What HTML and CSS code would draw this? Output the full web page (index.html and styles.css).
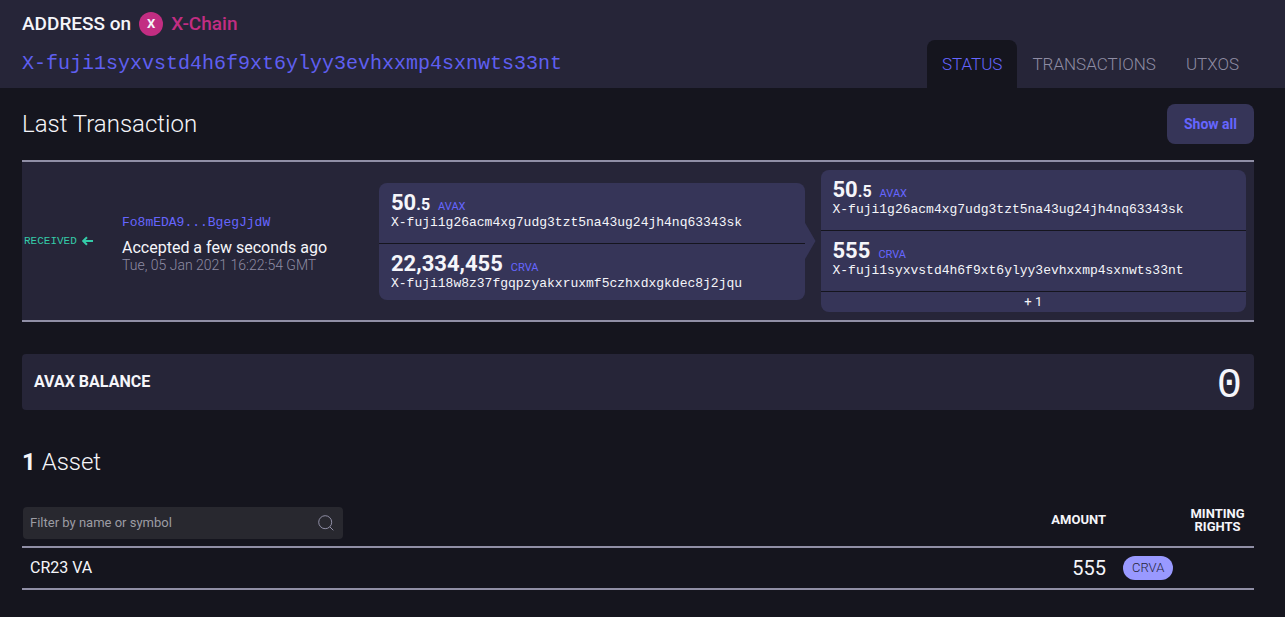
FILE: index.html
```html
<!DOCTYPE html>
<html lang="en">
<head>
<meta charset="utf-8">
<title>Address on X-Chain</title>
<link rel="stylesheet" href="styles.css">
</head>
<body>
<header class="page-header">
  <div class="identity">
    <h1 class="title">ADDRESS on <span class="chain-badge">X</span> <span class="chain-name">X-Chain</span></h1>
    <p class="address">X-fuji1syxvstd4h6f9xt6ylyy3evhxxmp4sxnwts33nt</p>
  </div>
  <nav class="tabs">
    <a class="tab tab-active" href="#status">STATUS</a>
    <a class="tab" href="#transactions">TRANSACTIONS</a>
    <a class="tab" href="#utxos">UTXOS</a>
  </nav>
</header>
<main class="content">
  <section>
    <div class="section-head">
      <h2 class="heading">Last Transaction</h2>
      <button class="show-all" type="button">Show all</button>
    </div>
    <article class="transaction">
      <div class="direction">RECEIVED
        <svg class="arrow" viewBox="0 0 12 10" aria-hidden="true"><path d="M11 5H1.5M5 1.2L1.2 5L5 8.8"/></svg>
      </div>
      <div class="summary">
        <a class="tx-id" href="#tx">Fo8mEDA9...BgegJjdW</a>
        <p class="accepted">Accepted a few seconds ago</p>
        <p class="timestamp">Tue, 05 Jan 2021 16:22:54 GMT</p>
      </div>
      <div class="flow">
        <div class="card card-from">
          <div class="entry">
            <p class="amount">50<span class="decimals">.5</span><span class="unit">AVAX</span></p>
            <p class="account">X-fuji1g26acm4xg7udg3tzt5na43ug24jh4nq63343sk</p>
          </div>
          <div class="entry">
            <p class="amount">22,334,455<span class="unit">CRVA</span></p>
            <p class="account">X-fuji18w8z37fgqpzyakxruxmf5czhxdxgkdec8j2jqu</p>
          </div>
        </div>
        <div class="card">
          <div class="entry">
            <p class="amount">50<span class="decimals">.5</span><span class="unit">AVAX</span></p>
            <p class="account">X-fuji1g26acm4xg7udg3tzt5na43ug24jh4nq63343sk</p>
          </div>
          <div class="entry">
            <p class="amount">555<span class="unit">CRVA</span></p>
            <p class="account">X-fuji1syxvstd4h6f9xt6ylyy3evhxxmp4sxnwts33nt</p>
          </div>
          <p class="more">+ 1</p>
        </div>
      </div>
    </article>
  </section>
  <section class="balance">
    <h2 class="balance-label">AVAX BALANCE</h2>
    <span class="balance-value">0</span>
  </section>
  <section>
    <h2 class="heading"><strong class="count">1</strong> Asset</h2>
    <table class="assets">
      <thead>
        <tr>
          <th class="name-cell">
            <div class="filter">
              <input class="filter-input" type="text" aria-label="Filter by name or symbol" placeholder="Filter by name or symbol">
              <svg class="search-icon" viewBox="0 0 16 16" aria-hidden="true"><circle cx="7.2" cy="7.2" r="6.5"/><path d="M12 12l3.3 3.3"/></svg>
            </div>
          </th>
          <th class="amount-cell">AMOUNT</th>
          <th class="symbol-cell" aria-label="Symbol"></th>
          <th class="rights-cell">MINTING<br>RIGHTS</th>
        </tr>
      </thead>
      <tbody>
        <tr>
          <td class="name-cell">CR23 VA</td>
          <td class="amount-cell">555</td>
          <td class="symbol-cell"><span class="pill">CRVA</span></td>
          <td class="rights-cell"></td>
        </tr>
      </tbody>
    </table>
  </section>
</main>
</body>
</html>
```
FILE: styles.css
```css
* {
  box-sizing: border-box;
}

body {
  margin: 0;
  background: #15151e;
  color: #f5f5fa;
  font: 400 16px/16px Roboto, sans-serif;
}

h1, h2, p {
  margin: 0;
}

a {
  color: inherit;
  text-decoration: none;
}

.page-header {
  display: flex;
  justify-content: space-between;
  align-items: flex-end;
  padding: 12px 31px 0 22px;
  background: #262538;
}

.title {
  display: flex;
  align-items: center;
  gap: 8px;
  font-size: 19px;
  font-weight: 500;
  line-height: 24px;
}

.chain-badge {
  width: 24px;
  border-radius: 50%;
  background: #c22d82;
  font-size: 13px;
  font-weight: 700;
  text-align: center;
}

.chain-name {
  color: #c22d82;
}

.address {
  padding: 16px 0 12px;
  color: #5f5ff0;
  font: 300 20px/24px "Liberation Mono", monospace;
}

.tabs {
  display: flex;
}

.tab {
  padding: 16px 15px;
  border-radius: 8px 8px 0 0;
  color: #8e8ca3;
  font-size: 17px;
  font-weight: 300;
}

.tab-active {
  background: #15151e;
  color: #6666ff;
}

.content {
  padding: 16px 31px 24px 22px;
}

.section-head {
  display: flex;
  justify-content: space-between;
  align-items: center;
  margin-bottom: 16px;
}

.heading {
  font-size: 24px;
  font-weight: 300;
  line-height: 32px;
}

.count {
  font-weight: 700;
}

.show-all {
  height: 40px;
  padding: 0 17px;
  border: 0;
  border-radius: 8px;
  background: #363558;
  color: #6666ff;
  font: 700 14px/16px Roboto, sans-serif;
}

.transaction {
  display: grid;
  grid-template-columns: 98px 257px 1fr;
  align-items: center;
  padding: 8px 8px 8px 2px;
  border-top: 2px solid #908fa6;
  border-bottom: 2px solid #908fa6;
  background: #262538;
}

.direction {
  display: flex;
  align-items: center;
  gap: 5px;
  color: #34cba8;
  font: 11px/16px "Liberation Mono", monospace;
}

.arrow {
  width: 12px;
  height: 10px;
  fill: none;
  stroke: currentColor;
  stroke-width: 2;
}

.summary {
  padding-top: 4px;
}

.tx-id {
  color: #6666ff;
  font: 13px/16px "Liberation Mono", monospace;
}

.accepted {
  padding-top: 8px;
  line-height: 18px;
}

.timestamp {
  color: #8e8ca3;
  font-size: 14px;
  font-weight: 300;
}

.flow {
  display: grid;
  grid-template-columns: 1fr 1fr;
  align-items: center;
  gap: 16px;
}

.card {
  position: relative;
  border-radius: 8px;
  background: #363558;
}

.card-from::after {
  content: "";
  position: absolute;
  top: 50%;
  left: 100%;
  width: 11px;
  height: 38px;
  background: #363558;
  clip-path: polygon(0 0, 100% 50%, 0 100%);
  transform: translateY(-50%);
}

.entry {
  padding: 8px 12px 12px;
  border-bottom: 1px solid #15151e;
}

.card-from .entry:last-child {
  padding-bottom: 8px;
  border-bottom: 0;
}

.amount {
  font-size: 22px;
  font-weight: 700;
  line-height: 24px;
}

.decimals {
  font-size: 16px;
  line-height: 16px;
}

.unit {
  margin-left: 8px;
  color: #6666ff;
  font-size: 11px;
  font-weight: 400;
  line-height: 12px;
}

.account {
  font: 13px/16px "Liberation Mono", monospace;
}

.more {
  font-size: 13px;
  line-height: 20px;
  text-align: center;
}

.balance {
  display: flex;
  justify-content: space-between;
  align-items: center;
  height: 56px;
  margin: 32px 0 36px;
  padding: 0 12px;
  border-radius: 4px;
  background: #262538;
}

.balance-label {
  font-size: 16px;
  font-weight: 700;
}

.balance-value {
  padding-top: 8px;
  font: 42px/48px "Liberation Mono", monospace;
}

.assets {
  width: 100%;
  margin-top: 29px;
  border-collapse: collapse;
}

.assets tr {
  border-bottom: 2px solid #908fa6;
}

.assets th {
  height: 40px;
  padding: 0;
  font-size: 13px;
  font-weight: 700;
  line-height: 13px;
  vertical-align: top;
}

.assets td {
  height: 42px;
  padding: 0;
}

.assets .name-cell {
  text-align: left;
}

.assets td.name-cell {
  padding-left: 8px;
}

.assets .amount-cell {
  width: 120px;
  text-align: right;
}

.assets th.amount-cell {
  padding-top: 6px;
}

.assets td.amount-cell {
  font-size: 20px;
}

.assets .symbol-cell {
  width: 75px;
  padding-left: 17px;
}

.assets .rights-cell {
  width: 73px;
  text-align: center;
}

.filter {
  display: flex;
  align-items: center;
  width: 320px;
  height: 32px;
  margin-left: 1px;
  padding: 0 9px 0 7px;
  border-radius: 4px;
  background: #28282f;
}

.filter-input {
  flex: 1;
  padding: 0;
  border: 0;
  outline: 0;
  background: transparent;
  color: #f5f5fa;
  font: 400 13px/16px Roboto, sans-serif;
}

.filter-input::placeholder {
  color: #9c9ca3;
}

.search-icon {
  width: 16px;
  height: 16px;
  fill: none;
  stroke: #908fa6;
}

.pill {
  display: inline-block;
  padding: 0 9px;
  border-radius: 12px;
  background: #9999ff;
  color: #262538;
  font-size: 13px;
  font-weight: 300;
  line-height: 24px;
}
```
